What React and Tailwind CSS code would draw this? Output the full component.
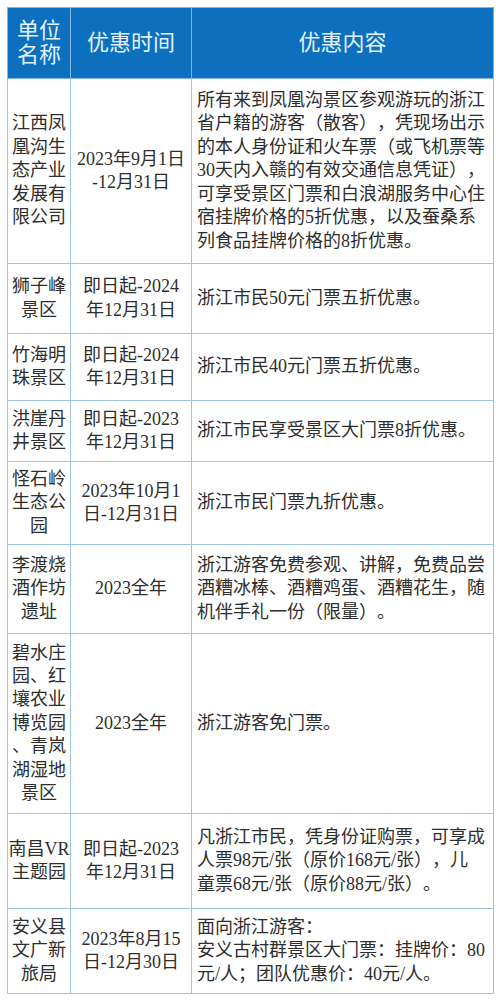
const rows = [
    {
        h: 185,
        name: ["江西凤", "凰沟生", "态产业", "发展有", "限公司"],
        time: ["2023年9月1日", "-12月31日"],
        content: [
            "所有来到凤凰沟景区参观游玩的浙江",
            "省户籍的游客（散客），凭现场出示",
            "的本人身份证和火车票（或飞机票等",
            "30天内入赣的有效交通信息凭证），",
            "可享受景区门票和白浪湖服务中心住",
            "宿挂牌价格的5折优惠，以及蚕桑系",
            "列食品挂牌价格的8折优惠。",
        ],
    },
    { h: 70, name: ["狮子峰", "景区"], time: ["即日起-2024", "年12月31日"], content: ["浙江市民50元门票五折优惠。"] },
    { h: 67, name: ["竹海明", "珠景区"], time: ["即日起-2024", "年12月31日"], content: ["浙江市民40元门票五折优惠。"] },
    { h: 61, name: ["洪崖丹", "井景区"], time: ["即日起-2023", "年12月31日"], content: ["浙江市民享受景区大门票8折优惠。"] },
    { h: 83, name: ["怪石岭", "生态公", "园"], time: ["2023年10月1", "日-12月31日"], content: ["浙江市民门票九折优惠。"] },
    {
        h: 89,
        name: ["李渡烧", "酒作坊", "遗址"],
        time: ["2023全年"],
        content: ["浙江游客免费参观、讲解，免费品尝", "酒糟冰棒、酒糟鸡蛋、酒糟花生，随", "机伴手礼一份（限量）。"],
    },
    {
        h: 180,
        name: ["碧水庄", "园、红", "壤农业", "博览园", "、青岚", "湖湿地", "景区"],
        time: ["2023全年"],
        content: ["浙江游客免门票。"],
    },
    {
        h: 95,
        name: ["南昌VR", "主题园"],
        time: ["即日起-2023", "年12月31日"],
        content: ["凡浙江市民，凭身份证购票，可享成", "人票98元/张（原价168元/张），儿", "童票68元/张（原价88元/张）。"],
    },
    {
        h: 85,
        name: ["安义县", "文广新", "旅局"],
        time: ["2023年8月15", "日-12月30日"],
        content: ["面向浙江游客：", "安义古村群景区大门票：挂牌价：80", "元/人；团队优惠价：40元/人。"],
    },
];

function Lines({ lines }) {
    return lines.map((l, i) => (
        <div key={i} className="whitespace-nowrap">
            {l}
        </div>
    ));
}

export default function App() {
    return (
        <div
            className="bg-white w-[500px] h-[1001px] pt-[7px] pl-[7px] [text-spacing-trim:space-all] [text-autospace:no-autospace]"
            style={{ fontFamily: '"Liberation Serif", "Noto Sans CJK SC", serif' }}
        >
            <table className="border-collapse table-fixed w-[486px] text-[#2e2e2e] text-[18px] leading-[23.4px]">
                <colgroup>
                    <col className="w-[63px]" />
                    <col className="w-[121px]" />
                    <col className="w-[302px]" />
                </colgroup>
                <thead>
                    <tr className="h-[71px] bg-[#0c70be] text-[#e2f2ff] text-[22px] leading-[24px]">
                        <th className="border border-[#7fb5e0] font-normal text-center p-0">
                            <div>单位</div>
                            <div>名称</div>
                        </th>
                        <th className="border border-[#7fb5e0] font-normal text-center p-0">优惠时间</th>
                        <th className="border border-[#7fb5e0] font-normal text-center p-0">优惠内容</th>
                    </tr>
                </thead>
                <tbody>
                    {rows.map((r, i) => (
                        <tr key={i} style={{ height: r.h }}>
                            <td className="border border-[#9fc5e4] text-center align-middle p-0">
                                <Lines lines={r.name} />
                            </td>
                            <td className="border border-[#9fc5e4] text-center align-middle p-0">
                                <Lines lines={r.time} />
                            </td>
                            <td className="border border-[#9fc5e4] text-left align-middle pl-[5px] pr-0 py-0">
                                <Lines lines={r.content} />
                            </td>
                        </tr>
                    ))}
                </tbody>
            </table>
        </div>
    );
}
